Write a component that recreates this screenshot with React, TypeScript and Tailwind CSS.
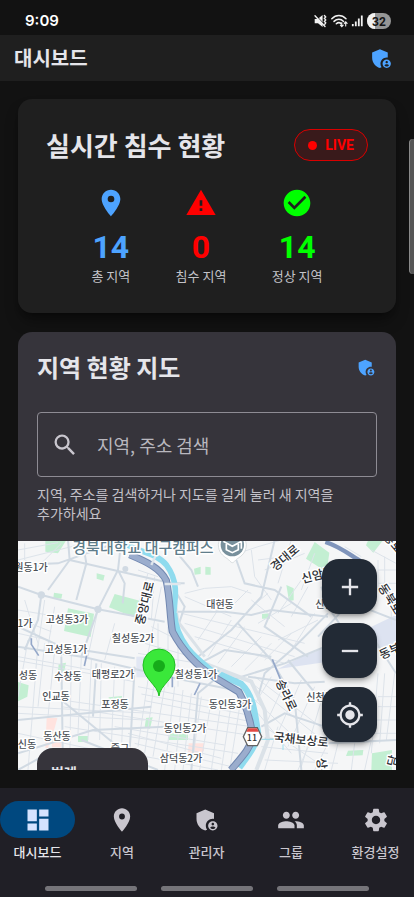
import type { ReactNode } from "react";
import {
  MdAdd,
  MdAdminPanelSettings,
  MdCheckCircle,
  MdDashboard,
  MdLocationOn,
  MdMyLocation,
  MdPeople,
  MdRemove,
  MdSearch,
  MdSettings,
  MdWarning,
} from "react-icons/md";

const stats = [
  { label: "총 지역", value: 14, icon: MdLocationOn, color: "text-[#4da3ff]" },
  { label: "침수 지역", value: 0, icon: MdWarning, color: "text-[#ff0000]" },
  { label: "정상 지역", value: 14, icon: MdCheckCircle, color: "text-[#00ff00]" },
];

const tabs = [
  { label: "대시보드", icon: MdDashboard, active: true },
  { label: "지역", icon: MdLocationOn },
  { label: "관리자", icon: MdAdminPanelSettings },
  { label: "그룹", icon: MdPeople },
  { label: "환경설정", icon: MdSettings },
];

// Neighbourhood names, centred on x / y
const places = [
  { name: "원동1가", x: 13, y: 26 },
  { name: "1가", x: 7, y: 82 },
  { name: "고성동3가", x: 49, y: 78 },
  { name: "칠성동2가", x: 115, y: 97 },
  { name: "고성동1가", x: 48, y: 108 },
  { name: "성동", x: 10, y: 134 },
  { name: "수창동", x: 50, y: 135 },
  { name: "태평로2가", x: 95, y: 133 },
  { name: "칠성동1가", x: 178, y: 133 },
  { name: "인교동", x: 38, y: 155 },
  { name: "포정동", x: 97, y: 163 },
  { name: "동인동3가", x: 212, y: 163 },
  { name: "동인동2가", x: 167, y: 187 },
  { name: "동산동", x: 39, y: 195 },
  { name: "신동", x: 9, y: 203 },
  { name: "중구", x: 102, y: 207 },
  { name: "삼덕동2가", x: 163, y: 217 },
  { name: "대현동", x: 202, y: 63 },
  { name: "신천동", x: 302, y: 156 },
  { name: "신암동", x: 311, y: 63 },
];

// Street names follow the direction of the road
const streets = [
  { name: "중앙대로", x: 127, y: 62, angle: -76 },
  { name: "경대로", x: 267, y: 17, angle: -40 },
  { name: "신암북로", x: 305, y: 33, angle: -14 },
  { name: "송라로", x: 268, y: 154, angle: 65 },
  { name: "국채보상로", x: 283, y: 199, angle: 6 },
  { name: "동부로", x: 377, y: 108, angle: -25 },
  { name: "상록", x: 304, y: 228, angle: 83 },
  { name: "동북로", x: 372, y: 58, angle: 58 },
  { name: "동로", x: 375, y: 2, angle: 50 },
  { name: "담", x: 375, y: 220, angle: -75 },
];

function StatusIcons() {
  return (
    <svg className="h-4 w-[77px]" viewBox="0 0 77 16" aria-hidden="true">
      <path d="M.7 6h3L8.6 2v12L4 10.2H.7z" fill="#f1f1f1" />
      <path d="M2 2.5 12 13" stroke="#121212" strokeWidth="1" />
      <g fill="none" stroke="#f1f1f1" strokeWidth="1.4" strokeLinecap="round">
        <path d="M1 2.8 11 13.5" />
        <path d="M10.4 2.5l1.3 1.4-1.3 1.5 1.3 1.5-1.3 1.5 1.3 1.5-1 1.4" strokeWidth="1.4" />
        <path d="M17.8 5.8c4.2-4.3 10-4.3 14.2 0M20 8.4c3-2.9 6.8-2.9 9.6 0M22.3 10.8c1.6-1.5 3.5-1.5 5 0" strokeWidth="1.5" />
        <path d="M27.8 9.5v4M26.4 12.2l1.4 1.5 1.4-1.5M31.7 13V9M30.3 10.3l1.4-1.5 1.4 1.5" strokeWidth="1.1" />
        <path d="M38.8 11v2.3M41.8 8.5v4.8M44.8 5.5v7.8M47.8 2.5v10.8" strokeWidth="1.8" strokeLinecap="butt" />
      </g>
      <rect x="53" width="24" height="16" rx="8" fill="#969696" />
      <path d="M61 0a8 8 0 0 0 0 16z" fill="#f1f1f1" />
      <text x="65" y="12.5" textAnchor="middle" fontSize="12" fontWeight="700" fontFamily="Roboto, sans-serif" fill="#151515">
        32
      </text>
    </svg>
  );
}

function MapArt() {
  return (
    <g transform="translate(0 -1) scale(.33333)" fill="none">
      {/* Rail yard and parks */}
      <path d="M850 350 960 308 1134 225v85L930 365l-150 22z" fill="#dde3f1" />
      <path d="M355 350h70v62h-70z" fill="#e2e7f3" />
      <g fill="#c3efd2">
        <path d="M82 2h62l-24 38-38-5zM290 162l75 20-12 52-80-32zM150 205l78 16-10 70-80-18zM236 100l24 6-4 16-20-6zM108 158l25 4-3 14-24-3zM528 86l20-6v22l-18 2zM562 80l16 2v22h-16zM805 135l22 10v36l-14 2zM732 222l24-2v16h-24zM890 6l44 32-8 58-62-40zM1050 2h44l-28 36-22-22zM122 372l22-4-6 30-18-6zM0 426l32 10-4 34-28 14zM272 472l40-4v14h-40zM384 534l20-2-8 34-16-4zM456 580h54v20h-58zM180 588h30v18h-30zM280 628h52v18h-52zM990 632l46-2-2 16-50 2zM1062 640l60-10v60h-62z" />
      </g>
      <g fill="#ffe3df">
        <path d="M86 534h32l-8 30-20 60h-8zM100 580l30 8v34h-28zM512 610h46v22l-22 14-26-10z" />
      </g>

      {/* Small lanes */}
      <g stroke="#dde3ea" strokeWidth="3">
        <path d="M0 350 330 410M0 362 350 425M0 500 400 520M0 520 380 540M0 580 280 640M130 480 700 560M130 500 690 585M140 560 660 640M350 610 640 680M360 440 690 505M370 462 690 525M380 482 700 545M290 560 620 615M330 580 610 655M330 640 600 690" />
        <path d="M30 300 0 470M60 310 30 690M80 310 60 500M110 330 90 530M160 340 155 690M190 350 180 580M220 360 210 600M250 370 245 600M290 380 280 620M320 390 310 640M390 420 360 620M410 420 380 640M440 440 405 650M470 440 440 690M495 450 470 690M520 460 495 690M550 470 520 690M580 480 545 690M610 480 580 690M640 490 610 690M665 500 635 690" />
        <path d="M490 220 860 310M500 250 830 350M530 290 800 370M570 350 640 240M600 370 680 260M640 380 730 290M680 390 760 310M540 300 600 210M740 360 820 280M500 170 640 230M700 180 800 260M720 250 820 190M780 300 900 240M820 330 890 220M630 210 690 150M690 210 750 160M500 160 560 145 640 140 700 160" />
        <path d="M690 420 900 590M710 410 920 570M700 470 860 620M720 520 820 640M740 560 930 690M730 620 930 640M740 660 960 670M760 410 700 510M800 430 740 560M850 420 770 600M890 440 810 620M920 450 850 680M740 690 780 560M840 690 880 600M890 690 930 610M940 690 960 610M1000 690 1010 610M1040 690 1060 600M1080 400 1060 640M1100 400 1085 610M1130 400 1105 600M1080 470h54M1080 500h54M1070 540h64M1060 580h74" />
        <path d="M20 10v50l60 30M0 60 200 10M60 80 130 10M0 30 120 8M20 180 60 310M0 210 120 230M10 240 100 275M0 280 90 300M80 180 60 320M110 200 90 320M140 310 130 350M240 210l-30 140M290 250l-30 110M360 90 420 110M390 100 350 230M410 110 400 240M430 140 390 340M400 260 480 300M380 310 520 350M360 340 540 370M450 260v180M480 290v150M420 250v170" />
        <path d="M660 40 720 20 790 0M700 30 710 110 760 180M720 60 800 50M740 90 860 40M820 0 780 130M850 120 780 220M870 140 820 230M890 40 850 150M1080 60v90M1100 50v120M1080 90h54M1080 130h54M1120 180v80M980 20 1030 50M1060 30 1134 70" />
      </g>

      {/* Main roads */}
      <g stroke="#d1dae3" strokeWidth="6">
        <path d="M0 75 120 70 320 0M0 140 70 165 240 208 440 245M0 260 130 320 350 355M70 165 60 240 20 330M150 0 155 60 90 150M240 208 300 90 310 0M240 208 190 350M155 60 440 125M195 10l10 60-30 110M300 90l20 40-6 60M0 320 200 352 470 415 660 452M130 350 135 690M235 370 225 530M0 540 400 500M130 480 300 620M0 640 225 570 440 560M350 380 340 560 330 690M190 600 420 690M0 690 90 640" />
        <path d="M450 130h50M470 150 500 200 480 260M655 60l25 70 90 20 110 80M770 0 730 170 640 270 540 350M620 215 700 225 760 210 930 230M480 215 620 215M660 250 760 360 830 480 850 690M545 370 620 330 760 350M640 420 800 370 970 300M810 360 900 470M930 220 820 330 740 400 720 470M790 140 740 260 870 350M690 410 830 430 920 425M740 595 930 610 1134 600M730 560 800 520 920 560M970 215 900 290M540 140 520 90 470 30M910 140 930 200 990 290M1030 200 1134 240M1070 300 1134 400M600 410 540 460 520 690" />
      </g>
      <path d="M500 330 545 365 700 425 740 510 750 600 715 690" stroke="#dbe2e8" strokeWidth="12" />
      <path d="M470 180 480 245 560 350" stroke="#dbe2e8" strokeWidth="9" />
      <g fill="#d1dae3">
        <circle cx="70" cy="165" r="11" />
        <circle cx="240" cy="208" r="11" />
        <circle cx="322" cy="87" r="9" />
        <circle cx="545" cy="366" r="9" />
      </g>
      <g stroke="#94a7c9" strokeWidth="5">
        <path d="M40 295v18l22 34M206 346l-7 32M463 410v32M546 430l-17 35M763 358l26 64" />
      </g>

      {/* River and expressway */}
      <path d="M328 14c40 24 90 26 118 62 34 46 28 90 20 150" stroke="#8fdbee" strokeWidth="17" />
      <path d="M468 220c6 90 68 137 112 172l90 40c38 36 40 90 50 146-4 38-28 66-56 105" stroke="#8fdbee" strokeWidth="19" />
      <path d="M335 44c48 20 92 40 110 78 12 58 10 100 18 152 34 66 76 106 130 140l70 42c22 40 34 82 42 134-8 36-36 64-66 100" stroke="#7389b1" strokeWidth="22" strokeLinejoin="round" />
      <path d="M335 44c48 20 92 40 110 78 12 58 10 100 18 152 34 66 76 106 130 140l70 42c22 40 34 82 42 134-8 36-36 64-66 100" stroke="#9badcd" strokeWidth="16" strokeLinejoin="round" />
      <path d="M400 75l14-30M440 132h48M600 402l12-12" stroke="#dfe6ec" strokeWidth="7" />
      <path d="M922 6c40 12 70 36 110 60M1092 135l42 60" stroke="#7f94bb" strokeWidth="13" />
      <path d="M730 598h65v32" stroke="#9bdded" strokeWidth="3" />

      {/* Route shield */}
      <path d="M689 563h29l13 27-13 27h-29l-13-27z" fill="#fff" stroke="#636363" strokeWidth="4" />
      <path d="M690 565h27l5 10h-37z" fill="#e34a43" />

      {/* University marker */}
      <path d="M601 14a42 42 0 0 1 84 0c0 23-14 34-27 42-6 4-10 12-15 12s-9-8-15-12c-13-8-27-19-27-42z" fill="#fff" stroke="#c9ced2" strokeWidth="2" />
      <circle cx="643" cy="14" r="35" fill="#78909c" />
      <path d="M616 4 643 19l27-15M625 12v17l18 9 18-9V12M670 4v22" stroke="#fff" strokeWidth="5" />
    </g>
  );
}

function AreaMap() {
  return (
    <svg
      className="absolute inset-0 h-full w-full"
      viewBox="0 0 378 229"
      preserveAspectRatio="xMidYMid slice"
      fontFamily="'Noto Sans CJK KR', sans-serif"
      role="img"
      aria-label="지역 현황 지도"
    >
      <rect width="378" height="229" fill="#f5f6f7" />
      <MapArt />
      <g textAnchor="middle" stroke="#ffffff" strokeWidth="3" strokeLinejoin="round" paintOrder="stroke">
        <text x="125" y="12" fontSize="15" fontWeight="500" fill="#607d8b">
          경북대학교 대구캠퍼스
        </text>
        {places.map((place) => (
          <text key={place.name} x={place.x} y={place.y + 4} fontSize="10" fontWeight="500" fill="#4a4f55">
            {place.name}
          </text>
        ))}
        {streets.map((street) => (
          <text
            key={street.name}
            transform={`translate(${street.x} ${street.y}) rotate(${street.angle})`}
            y="4"
            fontSize="12"
            fontWeight="500"
            fill="#2d3035"
          >
            {street.name}
          </text>
        ))}
      </g>
      <text x="234" y="200" textAnchor="middle" fontSize="9" fontWeight="500" fill="#333333">
        11
      </text>
      {/* Monitored area pin */}
      <path
        d="M141 155c-1-11-16-17-16-31a16 16 0 0 1 32 0c0 14-15 20-16 31z"
        fill="#3ae83a"
        stroke="#1fbd22"
        strokeWidth="1"
      />
      <circle cx="141" cy="125" r="6" fill="#16ab1a" />
    </svg>
  );
}

function MapButton({ label, children }: { label: string; children: ReactNode }) {
  return (
    <button
      type="button"
      aria-label={label}
      className="flex size-[55px] items-center justify-center rounded-[17px] bg-[#222a35] text-[#e5e5ea] shadow-md shadow-black/30"
    >
      {children}
    </button>
  );
}

export default function App() {
  return (
    <div className="relative flex min-h-screen flex-col bg-[#121212] font-['Noto_Sans_CJK_KR',sans-serif] text-[#e5e5ea]">
      {/* Status bar */}
      <div className="flex h-[35px] items-center justify-between pt-[7px] pr-[23px] pl-[25px]">
        <span className="font-['Inter',sans-serif] text-[15px] font-semibold text-white">9:09</span>
        <StatusIcons />
      </div>

      <header className="flex h-[46px] items-center justify-between bg-[#1f1f1f] pr-5 pl-[14px]">
        <h1 className="text-xl font-bold">대시보드</h1>
        <button type="button" aria-label="관리자" className="text-[#4da3ff]">
          <MdAdminPanelSettings size={25} />
        </button>
      </header>

      <main className="flex flex-1 flex-col gap-[19px] p-[18px]">
        {/* Live flood summary */}
        <section className="rounded-[14px] bg-[#1f1f1f] p-7 shadow-lg shadow-black/40">
          <div className="flex items-center justify-between">
            <h2 className="text-[26px] leading-9 font-bold">실시간 침수 현황</h2>
            <span className="flex h-8 items-center gap-2 rounded-full border border-[#d90000] bg-[#391a1b] px-[13px] font-['Roboto',sans-serif] text-sm font-bold text-[#ff0000]">
              <span className="size-[9px] rounded-full bg-[#ff0000]" />
              LIVE
            </span>
          </div>
          <div className="mt-6 flex justify-evenly">
            {stats.map(({ label, value, icon: Icon, color }) => (
              <div key={label} className="flex flex-col items-center">
                <Icon size={32} className={color} />
                <span className={`mt-2 font-['Roboto',sans-serif] text-[32px] leading-10 font-bold ${color}`}>{value}</span>
                <span className="text-[13px] leading-[18px] text-[#c3c3c8]">{label}</span>
              </div>
            ))}
          </div>
        </section>

        {/* Area map */}
        <section className="flex flex-1 flex-col overflow-hidden rounded-t-[14px] bg-[#36343b]">
          <div className="px-[19px] pt-[19px] pb-[18px]">
            <div className="flex items-center justify-between">
              <h2 className="text-2xl font-bold">지역 현황 지도</h2>
              <button type="button" aria-label="관리자 설정" className="text-[#4da3ff]">
                <MdAdminPanelSettings size={21} />
              </button>
            </div>
            <label className="mt-[29px] flex h-[65px] items-center gap-[18px] rounded-[4px] border border-[#8e8c94] px-[13px] text-[#c9c6ce]">
              <MdSearch size={28} className="shrink-0" />
              <input
                type="search"
                aria-label="지역, 주소 검색"
                placeholder="지역, 주소 검색"
                className="min-w-0 flex-1 bg-transparent text-lg outline-none placeholder:text-[#b9b7be]"
              />
            </label>
            <p className="mt-2 text-sm leading-[19px] break-keep text-[#c3c1c8]">
              지역, 주소를 검색하거나 지도를 길게 눌러 새 지역을 추가하세요
            </p>
          </div>

          <div className="relative min-h-[228px] flex-1 overflow-hidden">
            <AreaMap />
            <div className="absolute top-[18px] right-[19px] flex flex-col gap-[9px]">
              <MapButton label="확대">
                <MdAdd size={28} />
              </MapButton>
              <MapButton label="축소">
                <MdRemove size={28} />
              </MapButton>
              <MapButton label="내 위치">
                <MdMyLocation size={28} />
              </MapButton>
            </div>
            <div className="absolute top-[207px] left-[19px] w-[111px] rounded-2xl bg-[#36343b] px-[14px] pt-[14px] pb-16">
              <h3 className="text-sm font-bold">범례</h3>
            </div>
          </div>
        </section>
      </main>

      {/* Edge panel handle */}
      <div className="absolute top-[139px] right-0 h-[135px] w-[5px] rounded-l-[4px] border-l border-[#8a8a8a] bg-[#565656]" />

      <nav className="bg-[#201f26] pt-[13px]">
        <div className="flex justify-between pr-px">
          {tabs.map(({ label, icon: Icon, active }) => (
            <a
              key={label}
              href="#"
              className={`flex w-[75px] flex-col items-center text-[13px] leading-5 font-medium ${active ? "text-[#e5e5ea]" : "text-[#c9c6ce]"}`}
            >
              <span
                className={`mb-1 flex h-[37px] w-full items-center justify-center rounded-full ${active ? "bg-[#00487f] text-[#d5e3ff]" : ""}`}
              >
                <Icon size={28} />
              </span>
              {label}
            </a>
          ))}
        </div>
        {/* Gesture hints */}
        <div className="flex justify-center gap-6 pt-6 pb-[6px]">
          <span className="h-[5px] w-[92px] rounded-full bg-[#757479]" />
          <span className="h-[5px] w-[92px] rounded-full bg-[#757479]" />
          <span className="h-[5px] w-[92px] rounded-full bg-[#757479]" />
        </div>
      </nav>
    </div>
  );
}
